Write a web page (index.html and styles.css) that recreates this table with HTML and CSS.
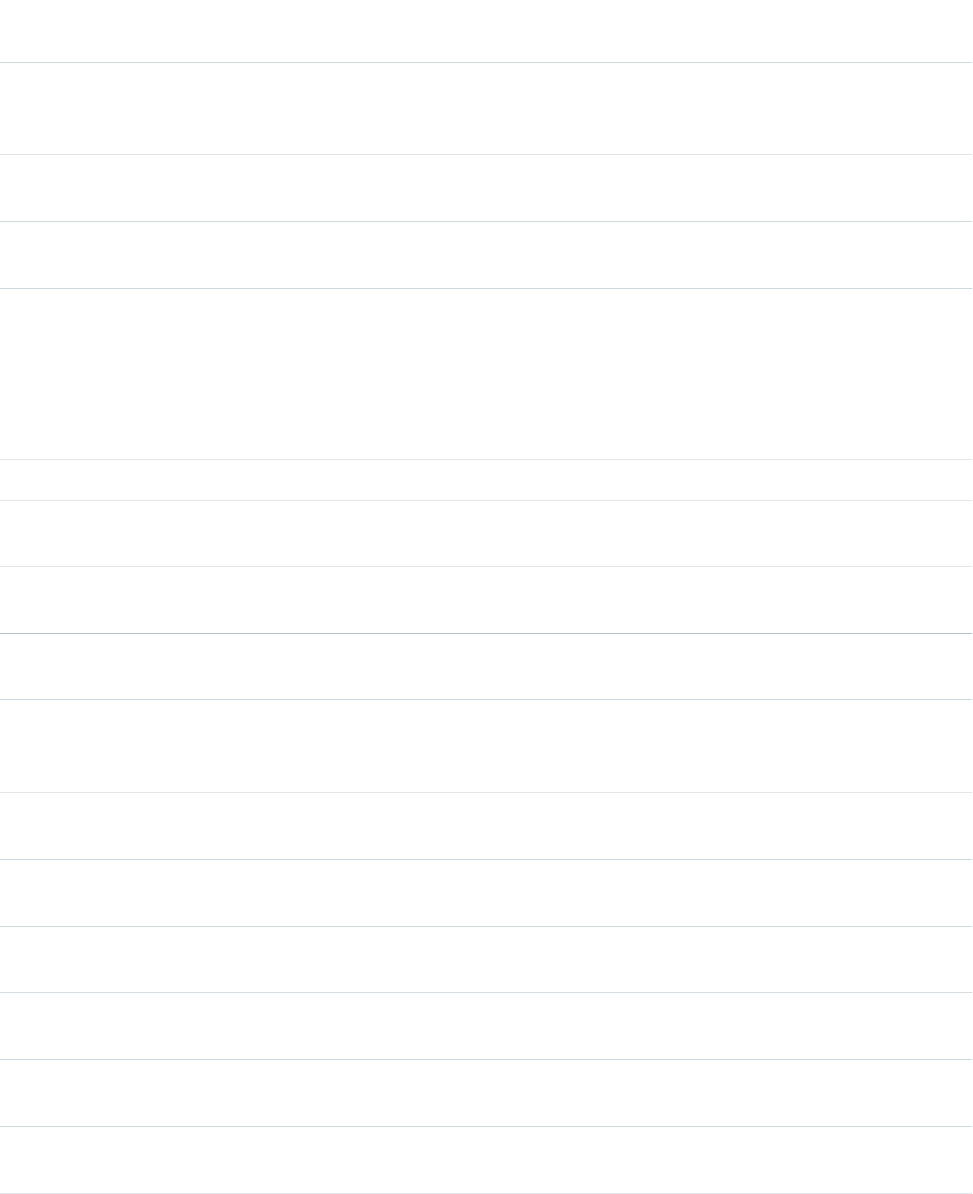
FILE: index.html
```html
<!DOCTYPE html>
<html lang="en">
  <head>
    <meta charset="UTF-8" />
    <meta name="viewport" content="width=device-width, initial-scale=1.0" />
    <title>List</title>
    <link rel="stylesheet" href="styles.css">
  </head>
  <body>
    <div class="sheet">
      <div class="row row-head"></div>
      <div class="row row-tall soft"></div>
      <div class="row"></div>
      <div class="row"></div>
      <div class="row row-block soft"></div>
      <div class="row row-thin soft"></div>
      <div class="row row-short soft"></div>
      <div class="row dark"></div>
      <div class="row row-short"></div>
      <div class="row row-taller soft"></div>
      <div class="row"></div>
      <div class="row"></div>
      <div class="row row-short mid"></div>
      <div class="row"></div>
      <div class="row"></div>
      <div class="row soft"></div>
    </div>
  </body>
</html>
```

FILE: styles.css
```css
body {
  margin: 0;
  padding: 0;
  background: #ffffff;
  font-family: "Liberation Sans", Arial, sans-serif;
}

.sheet {
  width: 972px;
}

.row {
  height: 66px;
  border-bottom: 1px solid #cfd8dc;
}

.row-head {
  height: 62px;
}

.row-tall {
  height: 91px;
}

.row-taller {
  height: 92px;
}

.row-short {
  height: 65px;
}

.row-block {
  height: 170px;
}

.row-thin {
  height: 40px;
}

.soft {
  border-bottom-color: #e3e7ea;
}

.mid {
  border-bottom-color: #d6dce0;
}

.dark {
  border-bottom-color: #b6c0c6;
}
```
